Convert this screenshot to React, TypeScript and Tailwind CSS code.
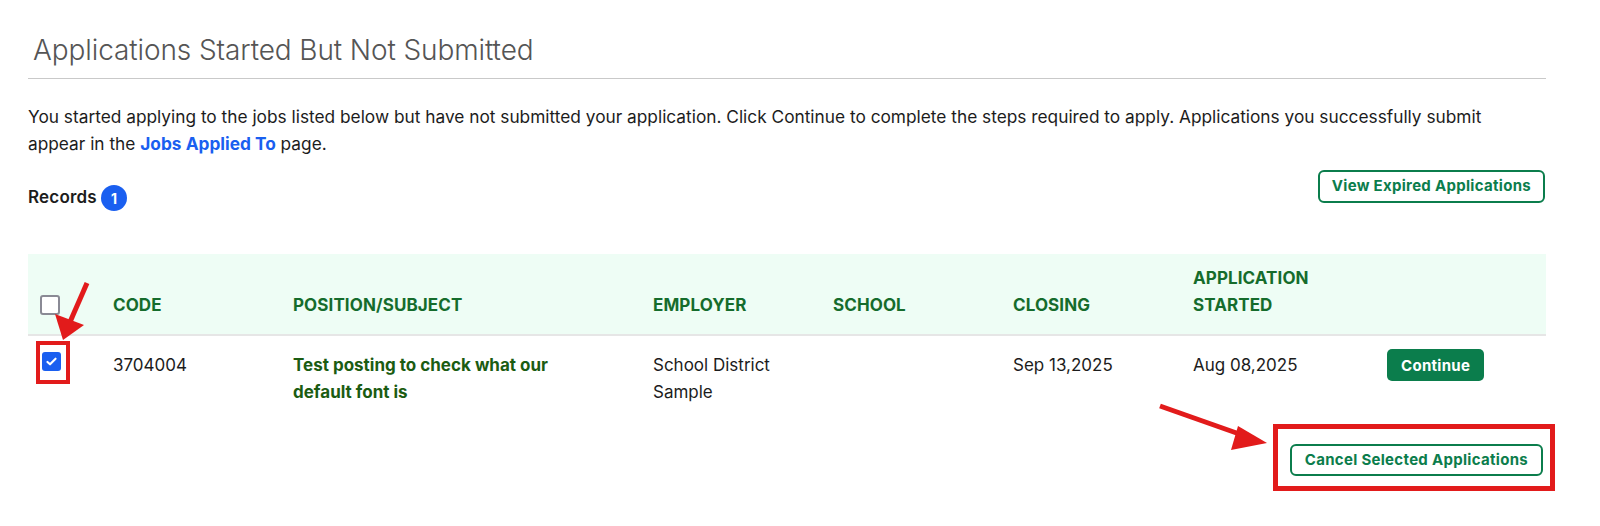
import React from "react";

const cols = "grid grid-cols-[85px_180px_360px_180px_180px_180px_180px_1fr]";

function Checkbox({ checked }: { checked?: boolean }) {
    if (checked) {
        return (
            <span className="flex h-[19px] w-[19px] items-center justify-center rounded-[3px] bg-[#1a5ff0]">
                <svg viewBox="0 0 16 16" className="h-[13px] w-[13px]" fill="none" stroke="white" strokeWidth="2.6" strokeLinecap="round" strokeLinejoin="round">
                    <path d="M3 8.5l3.2 3L13 4.5" />
                </svg>
            </span>
        );
    }
    return <span className="block h-[20px] w-[20px] rounded-[3px] border-2 border-[#8a8a95] bg-white" />;
}

export default function App() {
    return (
        <div className="relative min-h-[526px] bg-white font-['Inter','Noto_Sans',sans-serif] text-[#1c1c1c]">
            <div className="w-[1518px] ml-[28px]">
                <div className="pt-[33px] pb-[11px] pl-[5px] border-b border-[#c9c9c9]">
                    <h1 className="text-[28px] font-light leading-[34px] text-[#555555] tracking-[-0.1px]">
                        Applications Started But Not Submitted
                    </h1>
                </div>

                <p className="mt-[24px] text-[17.3px] leading-[27px] pr-[40px]">
                    You started applying to the jobs listed below but have not submitted your application. Click Continue to complete the steps required to apply. Applications you successfully submit appear in the{" "}
                    <a className="font-bold text-[#1a5ff0]">Jobs Applied To</a> page.
                </p>

                <div className="mt-[13px] flex items-start justify-between">
                    <div className="mt-[15px] flex items-center gap-[4px]">
                        <span className="text-[17px] font-semibold tracking-[0.2px]">Records</span>
                        <span className="flex h-[26px] w-[26px] items-center justify-center rounded-full bg-[#1a5ff0] text-[14px] font-bold text-white">1</span>
                    </div>
                    <button className="mr-[1px] h-[33px] rounded-[6px] border-2 border-[#0b7d4c] px-[12px] text-[15px] font-bold tracking-[0.3px] text-[#0b7d4c]">
                        View Expired Applications
                    </button>
                </div>

                <div className="mt-[43px]">
                    <div className={`${cols} h-[82px] items-end bg-[#eefdf5] border-b-2 border-[#e6e6e6] pb-[15px] text-[17px] font-bold leading-[27px] tracking-[0.1px] text-[#156c2c]`}>
                        <div className="pl-[12px] pb-[4px]"><Checkbox /></div>
                        <div>CODE</div>
                        <div>POSITION/SUBJECT</div>
                        <div>EMPLOYER</div>
                        <div>SCHOOL</div>
                        <div>CLOSING</div>
                        <div className="w-[140px]">APPLICATION STARTED</div>
                        <div />
                    </div>
                    <div className={`${cols} pt-[16px] text-[17px] leading-[27px]`}>
                        <div className="pl-[14px]"><Checkbox checked /></div>
                        <div>3704004</div>
                        <div className="w-[290px] font-bold text-[#1b5c12]">Test posting to check what our default font is</div>
                        <div className="w-[140px]">School District Sample</div>
                        <div />
                        <div>Sep 13,2025</div>
                        <div>Aug 08,2025</div>
                        <div className="pl-[14px] -mt-[3px]">
                            <button className="h-[32px] rounded-[5px] bg-[#0b7d4c] px-[14px] text-[15px] font-bold tracking-[0.3px] text-white">
                                Continue
                            </button>
                        </div>
                    </div>
                </div>

                <div className="mt-[38px] flex justify-end">
                    <button className="mr-[3px] h-[32px] rounded-[6px] border-2 border-[#0b7d4c] px-[13px] text-[15px] font-bold tracking-[0.3px] text-[#0b7d4c]">
                        Cancel Selected Applications
                    </button>
                </div>
            </div>

            {/* annotations */}
            <div className="pointer-events-none absolute left-[36px] top-[341px] h-[43px] w-[34px] border-[4px] border-[#e21b1b]" />
            <div className="pointer-events-none absolute left-[1273px] top-[424px] h-[67px] w-[282px] border-[5px] border-[#e21b1b]" />
            <svg className="pointer-events-none absolute left-0 top-0" width="1600" height="526">
                <line x1="87" y1="283" x2="70" y2="322" stroke="#e21b1b" strokeWidth="5" />
                <polygon points="63,340 55,314 84,325" fill="#e21b1b" />
                <line x1="1160" y1="406" x2="1245" y2="436" stroke="#e21b1b" strokeWidth="5" />
                <polygon points="1267,443 1238,426 1231,450" fill="#e21b1b" />
            </svg>
        </div>
    );
}
